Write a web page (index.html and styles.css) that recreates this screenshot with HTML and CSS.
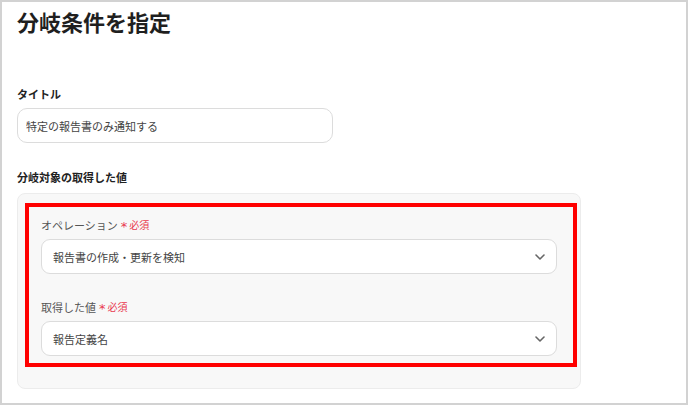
FILE: index.html
```html
<!DOCTYPE html>
<html lang="ja">
<head>
    <meta charset="UTF-8">
    <meta name="viewport" content="width=device-width, initial-scale=1.0">
    <title>分岐条件を指定</title>
    <link rel="stylesheet" href="styles.css">
</head>
<body>

    <div class="frame">
        <h1>分岐条件を指定</h1>

        <!-- タイトル -->
        <label class="field-label title-label" for="title">タイトル</label>
        <input type="text" id="title" class="text-input" value="特定の報告書のみ通知する">

        <!-- 分岐対象 -->
        <div class="field-label target-label">分岐対象の取得した値</div>
        <div class="card">
            <div class="highlight">
                <div class="sub-label">オペレーション<span class="required"><span class="mark">*</span>必須</span></div>
                <div class="select">
                    <span>報告書の作成・更新を検知</span>
                    <svg class="chevron" width="10" height="6" viewBox="0 0 10 6"><path d="M1 1l4 4 4-4" fill="none" stroke="#666" stroke-width="1.6" stroke-linecap="round" stroke-linejoin="round"/></svg>
                </div>

                <div class="sub-label second">取得した値<span class="required"><span class="mark">*</span>必須</span></div>
                <div class="select">
                    <span>報告定義名</span>
                    <svg class="chevron" width="10" height="6" viewBox="0 0 10 6"><path d="M1 1l4 4 4-4" fill="none" stroke="#666" stroke-width="1.6" stroke-linecap="round" stroke-linejoin="round"/></svg>
                </div>
            </div>
        </div>
    </div>

</body>
</html>
```

FILE: styles.css
```css
body {
    margin: 0;
    font-family: "Noto Sans CJK JP", "Noto Sans", sans-serif;
    background-color: #fff;
    color: #222;
}

.frame {
    width: 688px;
    height: 405px;
    box-sizing: border-box;
    border: 2px solid #d2d2d2;
    padding: 4px 0 0 15px;
    overflow: hidden;
}

h1 {
    margin: 0;
    font-size: 22px;
    line-height: 30px;
    font-weight: 700;
    color: #1f1f1f;
}

.field-label {
    display: block;
    font-size: 11px;
    line-height: 16px;
    font-weight: 700;
    color: #222;
}

.title-label {
    margin-top: 50px;
}

.text-input {
    display: block;
    margin-top: 6px;
    width: 316px;
    height: 35px;
    box-sizing: border-box;
    padding: 0 0 0 8px;
    border: 1px solid #dcdcdc;
    border-radius: 10px;
    font-family: inherit;
    font-size: 11px;
    color: #444;
    background: #fff;
    outline: none;
}

.target-label {
    margin-top: 26px;
}

.card {
    margin-top: 8px;
    width: 564px;
    box-sizing: border-box;
    padding: 9px 3px 21px 7px;
    border: 1px solid #ececec;
    border-radius: 8px;
    background-color: #f8f8f8;
}

.highlight {
    border: 4px solid #ff0000;
    padding: 10px 16px 7px 12px;
}

.sub-label {
    font-size: 11px;
    line-height: 16px;
    color: #555;
    display: flex;
    align-items: center;
}

.sub-label.second {
    margin-top: 25px;
}

.required {
    margin-left: 3px;
    font-size: 10px;
    color: #e8384f;
    display: flex;
    align-items: center;
}

.mark {
    font-family: "DejaVu Sans", sans-serif;
    font-size: 13px;
    line-height: 10px;
    padding-top: 4px;
    margin-right: 2px;
}

.select {
    margin-top: 6px;
    height: 35px;
    box-sizing: border-box;
    padding: 0 11px 0 11px;
    border: 1px solid #dcdcdc;
    border-radius: 9px;
    background-color: #fff;
    display: flex;
    align-items: center;
    justify-content: space-between;
    font-size: 11px;
    color: #444;
}
```
